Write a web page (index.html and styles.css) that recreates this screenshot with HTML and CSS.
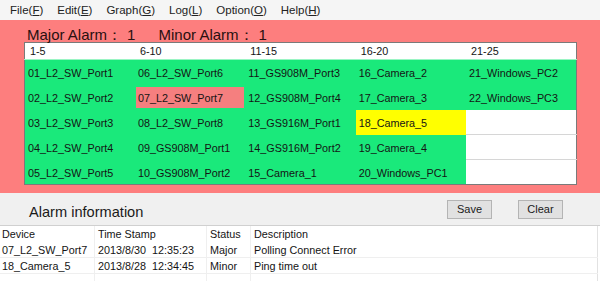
FILE: index.html
```html
<!DOCTYPE html>
<html lang="en">
<head>
  <meta charset="UTF-8">
  <title>Alarm Monitor</title>
  <link rel="stylesheet" href="styles.css">
</head>
<body>

<div class="menubar">
  <span class="menu-item">File(<u>F</u>)</span>
  <span class="menu-item">Edit(<u>E</u>)</span>
  <span class="menu-item">Graph(<u>G</u>)</span>
  <span class="menu-item">Log(<u>L</u>)</span>
  <span class="menu-item">Option(<u>O</u>)</span>
  <span class="menu-item">Help(<u>H</u>)</span>
</div>

<div class="alarm-panel">
  <div class="alarm-count">
    <span class="count-label">Major Alarm：</span><span class="count-num">1</span>
    <span class="count-label minor">Minor Alarm：</span><span class="count-num">1</span>
  </div>

  <table class="device-grid">
    <tr><th>1-5</th><th>6-10</th><th>11-15</th><th>16-20</th><th>21-25</th></tr>
    <tr>
      <td class="ok">01_L2_SW_Port1</td>
      <td class="ok">06_L2_SW_Port6</td>
      <td class="ok">11_GS908M_Port3</td>
      <td class="ok">16_Camera_2</td>
      <td class="ok">21_Windows_PC2</td>
    </tr>
    <tr>
      <td class="ok">02_L2_SW_Port2</td>
      <td class="major">07_L2_SW_Port7</td>
      <td class="ok">12_GS908M_Port4</td>
      <td class="ok">17_Camera_3</td>
      <td class="ok">22_Windows_PC3</td>
    </tr>
    <tr>
      <td class="ok">03_L2_SW_Port3</td>
      <td class="ok">08_L2_SW_Port8</td>
      <td class="ok">13_GS916M_Port1</td>
      <td class="minor">18_Camera_5</td>
      <td class="empty"></td>
    </tr>
    <tr>
      <td class="ok">04_L2_SW_Port4</td>
      <td class="ok">09_GS908M_Port1</td>
      <td class="ok">14_GS916M_Port2</td>
      <td class="ok">19_Camera_4</td>
      <td class="empty"></td>
    </tr>
    <tr>
      <td class="ok">05_L2_SW_Port5</td>
      <td class="ok">10_GS908M_Port2</td>
      <td class="ok">15_Camera_1</td>
      <td class="ok">20_Windows_PC1</td>
      <td class="empty last"></td>
    </tr>
  </table>
</div>

<div class="info-bar">
  <div class="info-title">Alarm information</div>
  <button class="btn">Save</button>
  <button class="btn">Clear</button>
</div>

<table class="log-list">
  <tr class="log-head">
    <td class="c-dev">Device</td>
    <td class="c-time">Time Stamp</td>
    <td class="c-status">Status</td>
    <td>Description</td>
  </tr>
  <tr>
    <td>07_L2_SW_Port7</td>
    <td class="pre">2013/8/30  12:35:23</td>
    <td>Major</td>
    <td>Polling Connect Error</td>
  </tr>
  <tr>
    <td>18_Camera_5</td>
    <td class="pre">2013/8/28  12:34:45</td>
    <td>Minor</td>
    <td>Ping time out</td>
  </tr>
  <tr class="log-blank">
    <td></td><td></td><td></td><td></td>
  </tr>
</table>

</body>
</html>
```

FILE: styles.css
```css
body {
  margin: 0;
  width: 600px;
  height: 281px;
  overflow: hidden;
  background: #ffffff;
  font-family: "Liberation Sans", Arial, sans-serif;
  color: #141414;
}

/* menu */
.menubar {
  height: 20px;
  display: flex;
  align-items: center;
  padding-left: 3px;
  background: #f5f5f5;
  font-size: 11.5px;
  color: #222;
}

.menu-item {
  padding: 0 7px;
  line-height: 20px;
}

/* alarm panel */
.alarm-panel {
  background: #fd7e7e;
  padding: 7px 23px 8px 24px;
}

.alarm-count {
  font-size: 15px;
  line-height: 15px;
  padding-left: 3px;
  color: #2a1010;
  white-space: nowrap;
}

.count-num {
  display: inline-block;
  margin-left: 5px;
}

.count-label.minor {
  margin-left: 19px;
}

.device-grid {
  width: 553px;
  table-layout: fixed;
  border-collapse: collapse;
  border: 1px solid #7a7a7a;
  background: #ffffff;
  font-size: 10.8px;
}

.device-grid th {
  height: 16px;
  padding: 0 0 0 5px;
  text-align: left;
  font-weight: normal;
  background: #ffffff;
  border-bottom: 1px solid #9af5c4;
}

.device-grid td {
  height: 25px;
  padding: 2px 0 0 3px;
  box-sizing: border-box;
  white-space: nowrap;
  overflow: hidden;
}

.device-grid td.ok {
  background: #1ae97b;
}

.device-grid td.major {
  background: #f57f7f;
  box-shadow: inset 1px 2px 0 0 #1ae97b, inset -1px -2px 0 0 #1ae97b;
}

.device-grid td.minor {
  background: #ffff00;
}

.device-grid td.empty {
  background: #ffffff;
  border-bottom: 1px solid #d6d6d6;
}

.device-grid td.empty.last {
  border-bottom: none;
}

/* info bar */
.info-bar {
  height: 32px;
  display: flex;
  align-items: center;
  padding: 0 37px 0 29px;
  background: #f0f0f0;
  border-bottom: 1px solid #d0d0d0;
}

.info-title {
  flex: 1;
  font-size: 14.6px;
  padding-top: 5px;
  color: #1a1a1a;
}

.btn {
  width: 45px;
  height: 19px;
  padding: 0;
  margin: 0 0 0 26px;
  background: #e1e1e1;
  border: 1px solid #b4b4b4;
  font-family: "Liberation Sans", Arial, sans-serif;
  font-size: 11px;
  color: #1a1a1a;
}

/* log list */
.log-list {
  width: 598px;
  table-layout: fixed;
  border-collapse: collapse;
  font-size: 10.8px;
  border-right: 1px solid #e2e2e2;
}

.log-list td {
  height: 15px;
  padding: 0 0 0 3px;
  white-space: nowrap;
  overflow: hidden;
  border-left: 1px solid #efefef;
  border-bottom: 1px solid #efefef;
}

.log-list td:first-child {
  border-left: none;
  padding-left: 2px;
}

.log-list .log-head td {
  height: 16px;
  border-bottom: none;
}

.log-list .log-blank td {
  height: 12px;
}

.log-list .pre {
  white-space: pre;
}

.c-dev { width: 92px; }
.c-time { width: 108px; }
.c-status { width: 40px; }
```
